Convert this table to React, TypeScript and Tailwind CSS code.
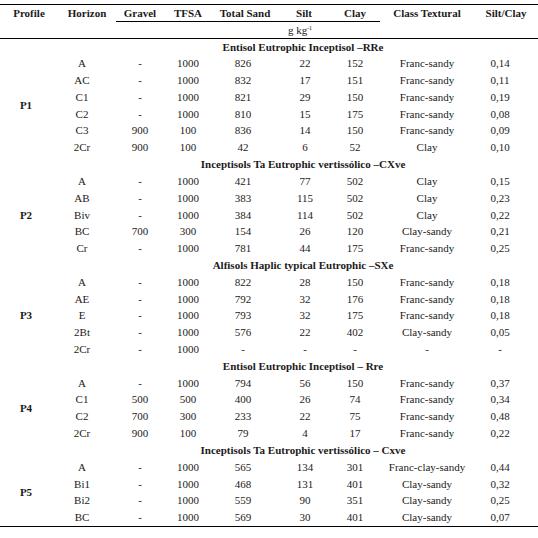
import React from "react";

type Row = [string, string, string, string, string, string, string, string];
type Group = { title: string; profile: string; rows: Row[] };

const groups: Group[] = [
  {
    title: "Entisol Eutrophic Inceptisol –RRe",
    profile: "P1",
    rows: [
      ["A", "-", "1000", "826", "22", "152", "Franc-sandy", "0,14"],
      ["AC", "-", "1000", "832", "17", "151", "Franc-sandy", "0,11"],
      ["C1", "-", "1000", "821", "29", "150", "Franc-sandy", "0,19"],
      ["C2", "-", "1000", "810", "15", "175", "Franc-sandy", "0,08"],
      ["C3", "900", "100", "836", "14", "150", "Franc-sandy", "0,09"],
      ["2Cr", "900", "100", "42", "6", "52", "Clay", "0,10"],
    ],
  },
  {
    title: "Inceptisols Ta Eutrophic vertissólico –CXve",
    profile: "P2",
    rows: [
      ["A", "-", "1000", "421", "77", "502", "Clay", "0,15"],
      ["AB", "-", "1000", "383", "115", "502", "Clay", "0,23"],
      ["Biv", "-", "1000", "384", "114", "502", "Clay", "0,22"],
      ["BC", "700", "300", "154", "26", "120", "Clay-sandy", "0,21"],
      ["Cr", "-", "1000", "781", "44", "175", "Franc-sandy", "0,25"],
    ],
  },
  {
    title: "Alfisols Haplic typical Eutrophic –SXe",
    profile: "P3",
    rows: [
      ["A", "-", "1000", "822", "28", "150", "Franc-sandy", "0,18"],
      ["AE", "-", "1000", "792", "32", "176", "Franc-sandy", "0,18"],
      ["E", "-", "1000", "793", "32", "175", "Franc-sandy", "0,18"],
      ["2Bt", "-", "1000", "576", "22", "402", "Clay-sandy", "0,05"],
      ["2Cr", "-", "1000", "-", "-", "-", "-", "-"],
    ],
  },
  {
    title: "Entisol Eutrophic Inceptisol – Rre",
    profile: "P4",
    rows: [
      ["A", "-", "1000", "794", "56", "150", "Franc-sandy", "0,37"],
      ["C1", "500", "500", "400", "26", "74", "Franc-sandy", "0,34"],
      ["C2", "700", "300", "233", "22", "75", "Franc-sandy", "0,48"],
      ["2Cr", "900", "100", "79", "4", "17", "Franc-sandy", "0,22"],
    ],
  },
  {
    title: "Inceptisols Ta Eutrophic vertissólico – Cxve",
    profile: "P5",
    rows: [
      ["A", "-", "1000", "565", "134", "301", "Franc-clay-sandy", "0,44"],
      ["Bi1", "-", "1000", "468", "131", "401", "Clay-sandy", "0,32"],
      ["Bi2", "-", "1000", "559", "90", "351", "Clay-sandy", "0,25"],
      ["BC", "-", "1000", "569", "30", "401", "Clay-sandy", "0,07"],
    ],
  },
];

export default function App() {
  const totalGroups = groups.length;
  return (
    <div className="w-[538px] h-[538px] bg-white pt-[4px] text-[#1c1a1a] font-['Liberation_Serif','Times_New_Roman',serif]">
      <table className="w-[538px] table-fixed border-collapse text-[11px] leading-none">
        <colgroup>
          <col className="w-[58px]" />
          <col className="w-[58px]" />
          <col className="w-[48px]" />
          <col className="w-[48px]" />
          <col className="w-[66px]" />
          <col className="w-[52px]" />
          <col className="w-[50px]" />
          <col className="w-[94px]" />
          <col className="w-[64px]" />
        </colgroup>
        <thead>
          <tr className="h-[17px] border-t border-black">
            <th className="text-center font-bold">Profile</th>
            <th className="text-center font-bold">Horizon</th>
            <th className="text-center font-bold border-b border-black">Gravel</th>
            <th className="text-center font-bold border-b border-black">TFSA</th>
            <th className="text-center font-bold border-b border-black">Total Sand</th>
            <th className="text-center font-bold border-b border-black">Silt</th>
            <th className="text-center font-bold border-b border-black">Clay</th>
            <th className="text-center font-bold">Class Textural</th>
            <th className="text-center font-bold">Silt/Clay</th>
          </tr>
          <tr className="h-[17px] border-b border-black">
            <th />
            <th />
            <th />
            <th />
            <th />
            <th className="text-center font-normal pr-[8px] whitespace-nowrap">
              g kg<span className="relative top-[-4px] text-[6px]">-1</span>
            </th>
            <th />
            <th />
            <th />
          </tr>
        </thead>
        <tbody>
          {groups.map((g, gi) => (
            <React.Fragment key={g.profile}>
              <tr className="h-[16.82px]">
                <td />
                <td colSpan={8} className="text-center font-bold pl-[10px] whitespace-nowrap">
                  {g.title}
                </td>
              </tr>
              {g.rows.map((r, ri) => (
                <tr
                  key={ri}
                  className={
                    gi === totalGroups - 1 && ri === g.rows.length - 1
                      ? "h-[16.82px] border-b border-black"
                      : "h-[16.82px]"
                  }
                >
                  {ri === 0 && (
                    <td rowSpan={g.rows.length} className="text-center font-bold pr-[6px]">
                      {g.profile}
                    </td>
                  )}
                  <td className="text-center pr-[10px]">{r[0]}</td>
                  <td className="text-center">{r[1]}</td>
                  <td className="text-center">{r[2]}</td>
                  <td className="text-center pr-[4px]">{r[3]}</td>
                  <td className="text-center pl-[2px]">{r[4]}</td>
                  <td className="text-center">{r[5]}</td>
                  <td className="text-center">{r[6]}</td>
                  <td className="text-center pr-[12px]">{r[7]}</td>
                </tr>
              ))}
            </React.Fragment>
          ))}
        </tbody>
      </table>
    </div>
  );
}
